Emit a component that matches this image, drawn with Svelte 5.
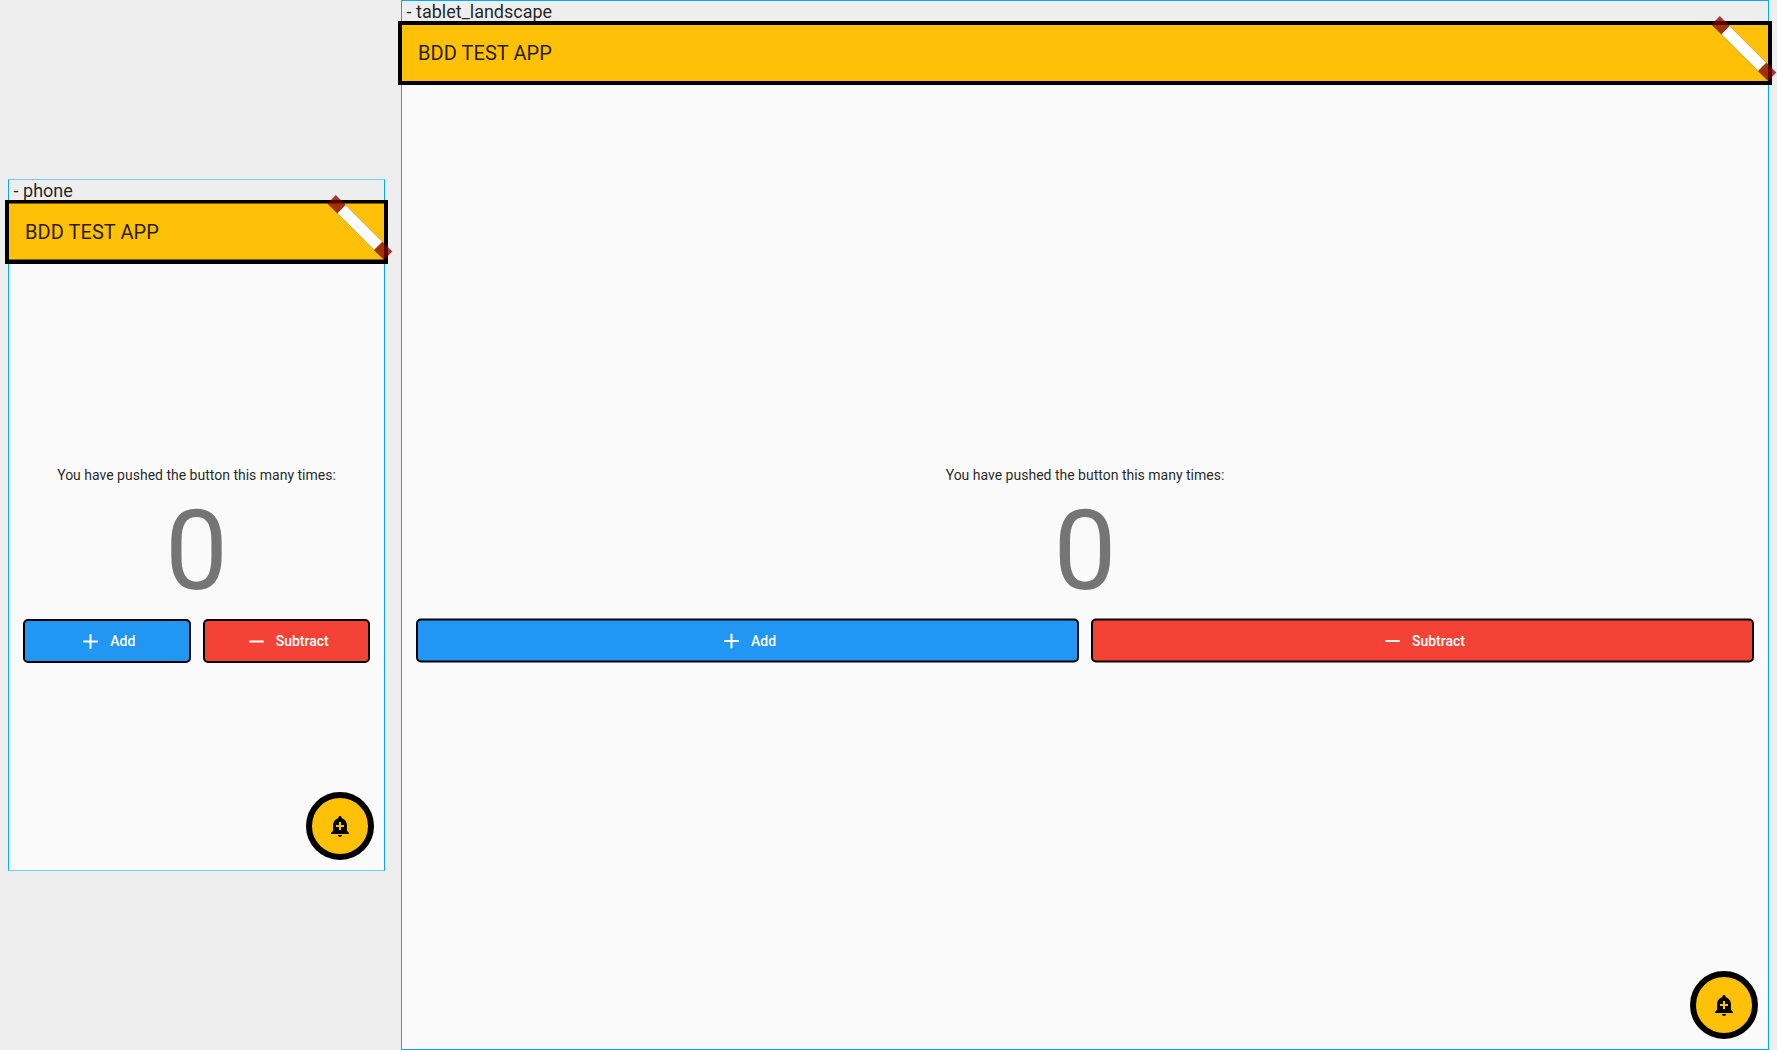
<script>
  let devices = $state([
    { name: 'phone', count: 0 },
    { name: 'tablet_landscape', count: 0 }
  ]);
</script>

<main>
  {#each devices as device}
    <section class="device {device.name}">
      <div class="label">- {device.name}</div>
      <div class="screen">
        <header>
          <h1>BDD TEST APP</h1>
          <svg class="ribbon" width="66" height="66" viewBox="0 0 66 66">
            <path d="M18.4 9.8 55.6 47 47.2 55 10 18z" fill="#fff" stroke="#a05a10" stroke-opacity=".55" stroke-width=".7" />
            <path d="M8.8 0 18.6 9.8 10.4 18.4.4 8.7z" fill="#800000" fill-opacity=".75" />
            <path d="M55.4 46.8 65.4 56.4 57 65 47 55.2z" fill="#800000" fill-opacity=".75" />
          </svg>
        </header>
        <div class="content">
          <p>You have pushed the button this many times:</p>
          <div class="count">{device.count}</div>
          <div class="actions">
            <button class="add" onclick={() => device.count++}>
              <svg width="25" height="25" viewBox="0 0 24 24"><path d="M19 13h-6v6h-2v-6H5v-2h6V5h2v6h6z" /></svg>
              <span>Add</span>
            </button>
            <button class="subtract" onclick={() => device.count--}>
              <svg width="25" height="25" viewBox="0 0 24 24"><path d="M19 13H5v-2h14z" /></svg>
              <span>Subtract</span>
            </button>
          </div>
        </div>
        <button class="fab" aria-label="Add alert">
          <svg width="24" height="24" viewBox="0 0 24 24"><path d="M10.01 21.01c0 1.1.89 1.99 1.99 1.99s1.99-.89 1.99-1.99h-3.98zm8.87-4.19V11c0-3.25-2.25-5.97-5.29-6.69v-.72C13.59 2.71 12.88 2 12 2s-1.59.71-1.59 1.59v.72C7.37 5.03 5.12 7.75 5.12 11v5.82L3 18.94V20h18v-1.06l-2.12-2.12zM16 13.01h-3v3h-2v-3H8V11h3V8h2v3h3v2.01z" /></svg>
        </button>
      </div>
    </section>
  {/each}
</main>

<style>
  :global(body) { background: #eee; }
  main {
    display: flex;
    align-items: center;
    gap: 16px;
    width: 1777px;
    height: 1050px;
    padding-left: 8px;
    box-sizing: border-box;
    overflow: hidden;
    font-family: Roboto, sans-serif;
    color: rgba(0, 0, 0, .87);
  }
  .device {
    box-sizing: border-box;
    display: flex;
    flex-direction: column;
    flex: none;
    border: 1px solid #03a9f4;
  }
  .phone { width: 377px; height: 692px; border-top-color: #79c9f1; border-bottom-color: #79c9f1; }
  .tablet_landscape { width: 1368px; height: 1050px; }
  .label { height: 24px; padding-left: 4.6px; font-size: 18px; line-height: 21px; white-space: pre; }
  .screen { position: relative; flex: 1; display: flex; flex-direction: column; background: #fafafa; }
  header {
    position: relative;
    height: 56px;
    flex: none;
    display: flex;
    align-items: center;
    padding-left: 16px;
    background: #ffc107;
    box-shadow: 0 0 0 4px #000;
  }
  .phone header { box-shadow: inset 0 -1px 0 #7f6003, 0 -1px 0 #7f6003, 0 0 0 4px #000; }
  h1 { margin: 0; font-size: 20px; line-height: 24px; font-weight: 400; letter-spacing: .05px; }
  .ribbon { position: absolute; right: -9px; top: -9px; overflow: visible; }
  .content { flex: 1; display: flex; flex-direction: column; align-items: center; justify-content: center; padding: 0 14px; }
  p { margin: -2px 0 0; font-size: 14px; line-height: 20px; }
  .count { font-size: 112px; line-height: 112px; margin: 10px 0 12px; color: #757575; }
  .actions { width: 100%; display: flex; gap: 12px; }
  .tablet_landscape .actions { transform: translateY(-.5px); }
  .actions button {
    flex: 1;
    height: 44px;
    box-sizing: border-box;
    display: flex;
    align-items: center;
    justify-content: center;
    gap: 7px;
    padding: 0;
    border: 2px solid #000;
    border-radius: 5px;
    color: #fff;
    font: 500 14px/20px Roboto, sans-serif;
  }
  .actions svg { fill: #fff; }
  .add { background: #2196f3; }
  .subtract { background: #f44336; }
  .fab {
    position: absolute;
    right: 10px;
    bottom: 10px;
    width: 68px;
    height: 68px;
    padding: 0;
    border: 6px solid #000;
    border-radius: 50%;
    background: #ffc107;
    display: flex;
    align-items: center;
    justify-content: center;
  }
</style>
